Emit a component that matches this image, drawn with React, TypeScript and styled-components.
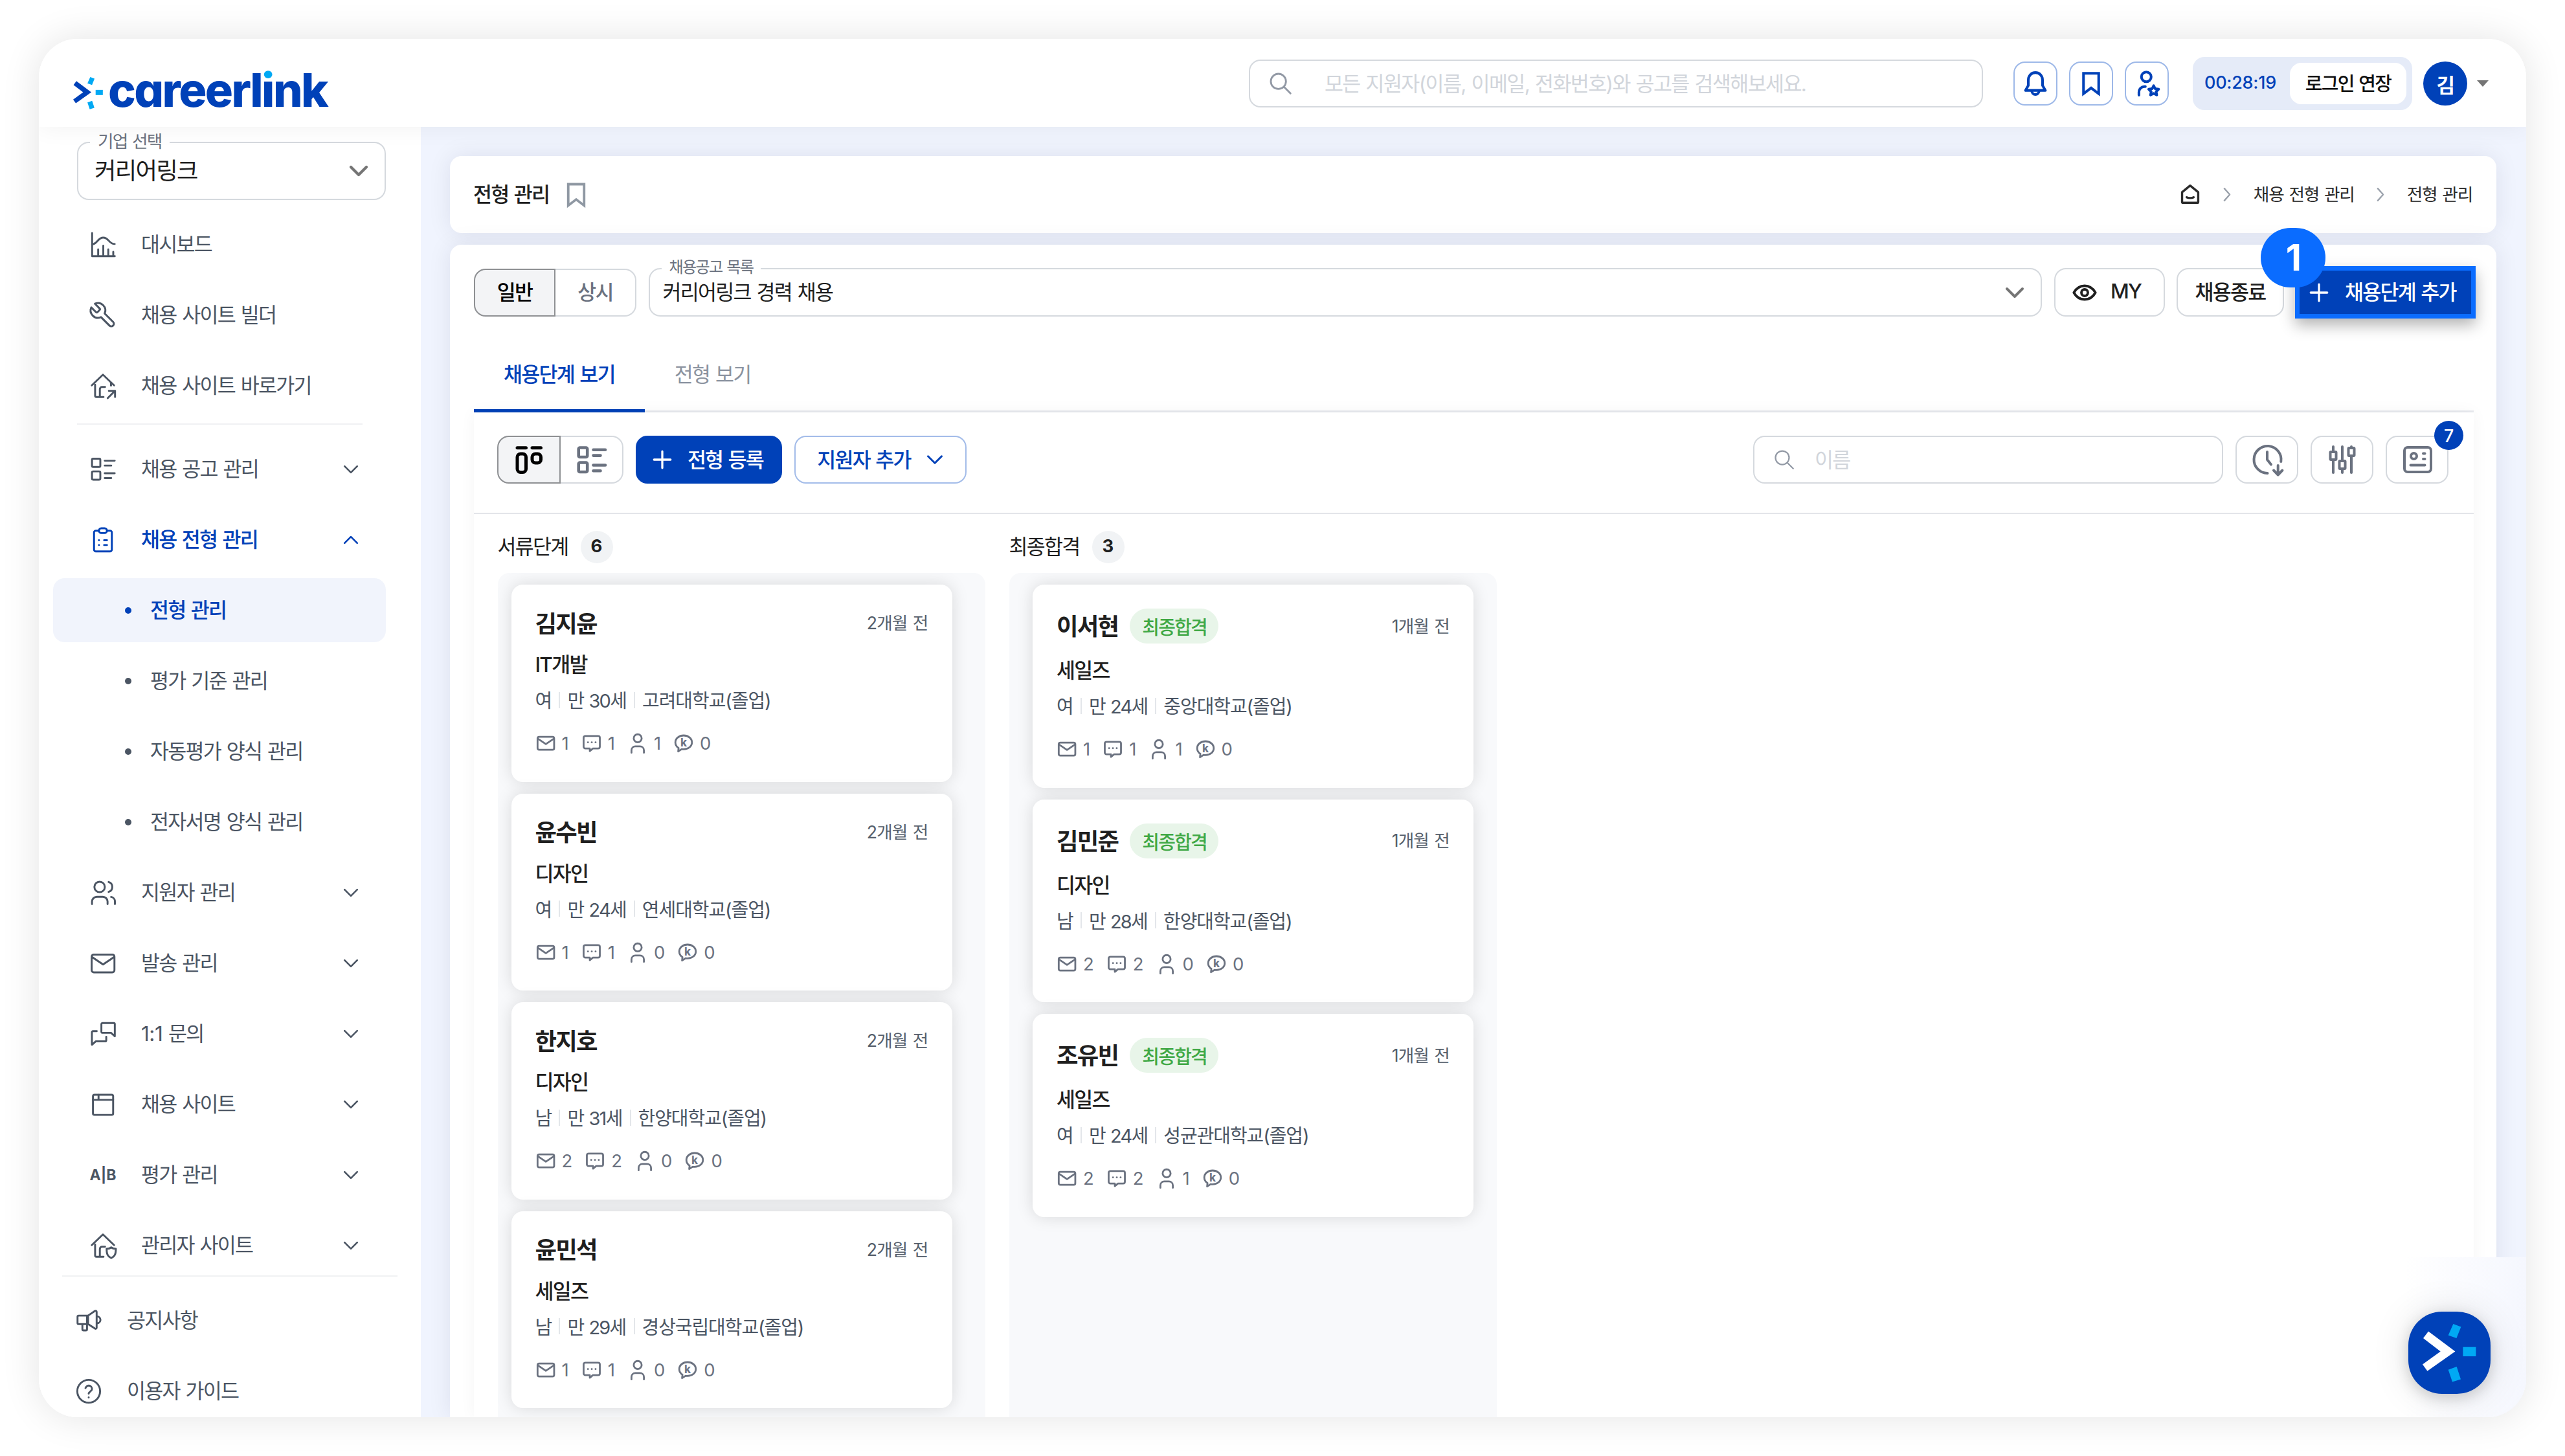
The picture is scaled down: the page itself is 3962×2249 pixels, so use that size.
import React from "react";
import styled, { createGlobalStyle, css } from "styled-components";

const BLUE = "#0041b8";
const INK = "#1f1f1f";
const SLATE = "#4b5563";
const GREY = "#6b7280";
const LINE = "#d5d9de";

const Global = createGlobalStyle`
  * { box-sizing: border-box; }
  html, body { margin: 0; padding: 0; background: #fff; }
  body {
    font-family: Inter, "Noto Sans CJK KR", sans-serif;
    font-size: 31.5px;
    letter-spacing: -0.055em;
    word-spacing: 0.05em;
    color: ${INK};
    overflow: hidden;
  }
  button { font: inherit; letter-spacing: inherit; word-spacing: inherit; color: inherit; margin: 0; padding: 0; background: #fff; border: 0; }
  svg { display: block; flex: none; overflow: visible; }
`;

/* Lifts Hangul onto the optical centre of its row. */
const T = styled.span`
  display: inline-block;
  padding-bottom: 0.14em;
`;

/* ---------- icons ---------- */

const Svg = styled.svg<{ $size: number; $stroke: number }>`
  width: ${(p) => p.$size}px;
  height: ${(p) => p.$size}px;
  fill: none;
  stroke: currentColor;
  stroke-width: ${(p) => p.$stroke};
  stroke-linecap: round;
  stroke-linejoin: round;
`;

const House = () => (
  <>
    <path d="M2.6 11.6 12 2.6l9.4 9" />
    <path d="M5.4 11v9.3a1.1 1.1 0 0 0 1.1 1.1h6" />
    <path d="M9.4 21v-6.2A1.8 1.8 0 0 1 11.200 13h2.6" />
  </>
);

const glyphs: Record<string, React.ReactNode> = {
  chart: (
    <>
      <path d="M2.900 2.200V21.700H22" />
      <path d="M2.900 11.600c4.400 0 4.600-5.600 9.300-5.600s4.800 5.400 9.700 5.400" />
      <path d="M8 16v5.500M12.300 12.800v8.700M16.500 16v5.500M20.700 18v3.500" />
    </>
  ),
  wrench: (
    <g transform="translate(24.300 -0.300) scale(-1.030 1.030)">
      <path d="M14.700 6.300a1 1 0 0 0 0 1.400l1.600 1.600a1 1 0 0 0 1.400 0l3.770-3.770a6 6 0 0 1-7.940 7.940l-6.910 6.910a2.120 2.120 0 0 1-3-3l6.910-6.910a6 6 0 0 1 7.940-7.940l-3.760 3.760z" />
    </g>
  ),
  houseArrow: (
    <>
      <House />
      <path d="M18.800 9.500v2.300" />
      <path d="m16 22.400 6-6M17 16.200h5.200v5.200" />
    </>
  ),
  houseShield: (
    <>
      <House />
      <path d="M19 13.500c1.200 1 2.500 1.200 3.900 1.200 0 4.300-.8 6.300-3.900 7.800-3.100-1.500-3.900-3.500-3.900-7.800 1.400 0 2.700-.2 3.900-1.200z" />
    </>
  ),
  list: (
    <>
      <rect x="2.800" y="3" width="7" height="7" rx="1" />
      <rect x="2.800" y="13.700" width="7" height="7" rx="1" />
      <path d="M13.500 4.700h8.400M13.500 8.800h5.500M13.500 15.300h8.400M13.500 19.400h5.500" />
    </>
  ),
  clipboard: (
    <>
      <path d="M8.600 4.200H6A1.500 1.500 0 0 0 4.500 5.700v14.500a1.500 1.500 0 0 0 1.500 1.500h12a1.500 1.500 0 0 0 1.500-1.500V5.700A1.500 1.500 0 0 0 18 4.200h-2.600" />
      <rect x="8.600" y="2.200" width="6.800" height="4" rx="2" />
      <path d="M8.600 12.300h.1M13 12.300h2.400M8.600 16.300h.1M13 16.300h2.400" />
    </>
  ),
  users: (
    <>
      <circle cx="9.200" cy="7.100" r="4.400" />
      <path d="M2.800 21.600v-2.200a4 4 0 0 1 4-4h5.100a4 4 0 0 1 4 4v2.200" />
      <path d="M16.800 2.900a4.400 4.400 0 0 1 0 8.400" />
      <path d="M18.900 15.500a3.900 3.900 0 0 1 3.200 3.900v2.200" />
    </>
  ),
  mail: (
    <>
      <rect x="2.500" y="4.600" width="19.200" height="15" rx="1.800" />
      <path d="m3 6.800 9.100 6.200 9.100-6.200" />
    </>
  ),
  chats: (
    <>
      <path d="M10.700 3.800a.9.900 0 0 1 .9-.9h9.500a.9.900 0 0 1 .9.900V14l-3.200-2.900h-7.200a.9.900 0 0 1-.9-.9z" />
      <path d="M6.800 9.700H3.600a.9.900 0 0 0-.9.900V21.200l3.200-2.900h8a.9.900 0 0 0 .9-.9v-3" />
    </>
  ),
  window: (
    <>
      <rect x="3.600" y="3.800" width="17" height="17" rx="1.300" />
      <path d="M3.600 8.100h17M8.300 4v4" />
    </>
  ),
  megaphone: (
    <>
      <path d="M11.500 7.700H3.600a1 1 0 0 0-1 1v5.200a1 1 0 0 0 1 1h7.900" />
      <path d="m11.500 7.700 5.700-3.900c.7-.4 1.500 0 1.500.8v13.200c0 .8-.8 1.200-1.500.8l-5.700-3.700z" />
      <path d="M6.700 15v4.200c0 .6.400 1 1 1h1.900c.6 0 1-.4 1-1V7.900" />
      <path d="M19 8.400a2.900 2.900 0 0 1 0 5.800" />
    </>
  ),
  help: (
    <>
      <circle cx="12" cy="12" r="9.600" />
      <path d="M9.300 9.300a2.800 2.800 0 0 1 5.500.8c0 1.900-2.800 2.300-2.800 4M12 17.200v.1" />
    </>
  ),
  search: (
    <>
      <circle cx="10" cy="10" r="7" />
      <path d="m15.200 15.200 6 6" />
    </>
  ),
  bell: (
    <>
      <path d="M12 2.800c-3.700 0-6 2.800-6 6.400v4.400l-2.400 4.200h16.800L18 13.600V9.200c0-3.600-2.300-6.400-6-6.400z" />
      <path d="M8.900 18.200a3.100 3.100 0 0 0 6.200 0" />
    </>
  ),
  bookmark: <path d="M5.600 3.400h12.800v17.200L12 15.700l-6.400 4.900z" strokeLinejoin="miter" />,
  userStar: (
    <>
      <circle cx="11.600" cy="6.400" r="4.100" />
      <path d="M5.400 21.800v-2.600a4.600 4.600 0 0 1 4.600-4.600h.8" />
      <path d="m17.800 13.800 1.300 2.600 2.900.4-2.100 2 .5 2.900-2.600-1.400-2.600 1.400.5-2.900-2.100-2 2.900-.4z" />
    </>
  ),
  home: (
    <>
      <path d="M3.200 9.800 12 2.600l8.800 7.200v10.600a1 1 0 0 1-1 1H4.200a1 1 0 0 1-1-1z" />
      <path d="M8.200 15.300c2 1.100 5.600 1.100 7.600 0" />
    </>
  ),
  eye: (
    <>
      <path d="M2 12c2-3.600 5.400-6.300 10-6.300s8 2.700 10 6.300c-2 3.600-5.400 6.300-10 6.300S4 15.600 2 12z" />
      <circle cx="12" cy="12" r="3" />
    </>
  ),
  plus: <path d="M12 3v18M3 12h18" />,
  down: <path d="m3 7.500 9 9 9-9" />,
  up: <path d="m3 16.500 9-9 9 9" />,
  right: <path d="m7.500 3 8 9-8 9" />,
  message: (
    <>
      <path d="M4.600 3.600h14.800a2 2 0 0 1 2 2v10.500a2 2 0 0 1-2 2h-6l-3.600 3v-3H4.600a2 2 0 0 1-2-2V5.600a2 2 0 0 1 2-2z" />
      <path d="M7.600 11h.1M12 11h.1M16.400 11h.1" />
    </>
  ),
  person: (
    <>
      <circle cx="12" cy="6.300" r="4.600" />
      <path d="M4.800 23v-2.800c0-2.600 1.900-4.500 4.500-4.500h5.400c2.600 0 4.500 1.900 4.500 4.500V23" />
    </>
  ),
  kakao: (
    <>
      <path d="M12 3c5.400 0 9.600 3.500 9.600 8s-4.200 8-9.600 8c-.8 0-1.500-.1-2.200-.2L5.700 21.500l.4-4C3.800 16 2.400 13.700 2.400 11c0-4.500 4.200-8 9.600-8z" />
      <text x="12" y="15.800" textAnchor="middle" fontSize="13" fontWeight="700" fill="currentColor" stroke="none" letterSpacing="0">
        k
      </text>
    </>
  ),
};

const Icon = ({ name, size = 44, stroke = 1.6 }: { name: string; size?: number; stroke?: number }) => (
  <Svg viewBox="0 0 24 24" $size={size} $stroke={stroke}>
    {glyphs[name]}
  </Svg>
);

const toolGlyphs: Record<string, React.ReactNode> = {
  board: (
    <>
      <path d="M6 5.700h13.500M29 5.700h13.500" />
      <rect x="6" y="15" width="13.500" height="28.500" rx="5" />
      <rect x="29" y="15" width="13.500" height="14" rx="5" />
    </>
  ),
  rows: (
    <>
      <rect x="3.700" y="5.500" width="13.500" height="14.500" rx="2" />
      <rect x="3.700" y="28.500" width="13.500" height="14.500" rx="2" />
      <path d="M26.500 8.800H45M26.500 17.600h11M26.500 32.500H45M26.500 41.300h11" />
    </>
  ),
  clock: (
    <>
      <path d="M24.500 45A21 21 0 1 1 45.300 27" />
      <path d="M24 12v12l6 7.500" />
      <path d="M40.700 33v14M34 40.500l6.700 7 6.700-7" />
    </>
  ),
  sliders: (
    <>
      <path d="M10 4v8M10 24v20M24 4v22M24 38v6M38 4v2M38 18v26" />
      <rect x="5.500" y="12" width="9" height="12" rx="1" />
      <rect x="19.500" y="26" width="9" height="12" rx="1" />
      <rect x="33.500" y="6" width="9" height="12" rx="1" />
    </>
  ),
  idCard: (
    <>
      <rect x="4" y="5" width="41" height="38" rx="5" />
      <circle cx="18.500" cy="18.500" r="4.500" />
      <path d="M33 14.500h2.500M33 23h2.500M13.500 32.500h22" />
    </>
  ),
};

const ToolIcon = ({ name, stroke = 4 }: { name: string; stroke?: number }) => (
  <Svg viewBox="0 0 48 48" $size={48} $stroke={stroke}>
    {toolGlyphs[name]}
  </Svg>
);

const Spark = ({ width, color }: { width: number; color: string }) => (
  <svg width={width} height={(width * 89.4) / 82.7} viewBox="22.300 19.300 82.700 89.400">
    <polygon fill={color} points="31.300,30.700 72.700,61.700 29.700,92 22.300,81.700 50,61.700 23.300,41.300" />
    <g fill="#00a9f4">
      <polygon points="69.700,19.300 81.700,23.700 74.700,41.300 62,36.700" />
      <rect x="84.700" y="55" width="20" height="14.300" />
      <polygon points="62,90 75,85.300 81.300,104.700 68.300,108.700" />
    </g>
  </svg>
);

/* ---------- shell ---------- */

const Page = styled.div`
  width: 3962px;
  height: 2249px;
  padding: 60px;
  background: #fff;
`;

const FrameStack = styled.div`
  display: grid;
  & > * { grid-area: 1 / 1; }
`;

const Frame = styled.div`
  position: relative;
  width: 3842px;
  height: 2129px;
  border-radius: 60px;
  overflow: hidden;
  display: grid;
  grid-template-rows: 136px 1993px;
  background: #fff;
`;

const FrameShadow = styled.div`
  width: 3842px;
  height: 2129px;
  border-radius: 60px;
  box-shadow: 0 0 60px rgba(0, 0, 0, 0.11);
`;

const Header = styled.header`
  position: relative;
  z-index: 2;
  display: flex;
  align-items: center;
  justify-content: space-between;
  padding: 2px 58px 0 53px;
  background: #fff;
  box-shadow: 0 0 36px rgba(0, 0, 0, 0.06);
`;

const Logo = styled.div`
  align-self: flex-start;
  display: flex;
  align-items: flex-start;
  padding-top: 41px;
  gap: 8px;
  & > svg { margin-top: 16px; }
`;

const Wordmark = styled.div`
  font-size: 72px;
  line-height: 72px;
  font-weight: 800;
  letter-spacing: -0.036em;
  color: ${BLUE};
  font-feature-settings: "cv11";
`;

const DottedI = styled.span`
  color: transparent;
  background: linear-gradient(#00a9f4 0 36%, ${BLUE} 36%);
  background-clip: text;
  -webkit-background-clip: text;
`;

const HeaderTools = styled.div`
  display: flex;
  align-items: center;
`;

const SearchBox = styled.div<{ $w: number; $pad: number; $gap: number }>`
  width: ${(p) => p.$w}px;
  height: 74px;
  display: flex;
  align-items: center;
  gap: ${(p) => p.$gap}px;
  padding-left: ${(p) => p.$pad}px;
  border: 2px solid ${LINE};
  border-radius: 18px;
  color: #9299a5;
`;

const Placeholder = styled(T)`
  color: #d1d5db;
  letter-spacing: -0.051em;
`;

const IconButtons = styled.div`
  display: flex;
  gap: 18px;
  margin: 0 37px 0 47px;
`;

const SquareButton = styled.button`
  width: 68px;
  height: 68px;
  display: grid;
  place-items: center;
  border: 2px solid #9db8e8;
  border-radius: 18px;
  color: ${BLUE};
`;

const Session = styled.div`
  width: 339px;
  height: 82px;
  display: flex;
  align-items: center;
  justify-content: space-between;
  padding: 0 9px 0 18px;
  border-radius: 18px;
  background: #e5ebf8;
`;

const Timer = styled(T)`
  font-size: 27px;
  font-weight: 500;
  letter-spacing: -0.01em;
  color: ${BLUE};
`;

const ExtendButton = styled.button`
  width: 180px;
  height: 64px;
  border-radius: 18px;
  font-size: 29px;
  font-weight: 500;
  color: #111;
`;

const Avatar = styled.div`
  width: 68px;
  height: 68px;
  margin: 0 15px 0 17px;
  display: grid;
  place-items: center;
  border-radius: 50%;
  background: ${BLUE};
  color: #fff;
  font-size: 31px;
  font-weight: 700;
`;

const Caret = styled.i`
  border: 9.500px solid transparent;
  border-top: 10px solid #757575;
  border-bottom: 0;
`;

const Body = styled.div`
  display: grid;
  grid-template-columns: 590px 1fr;
  min-height: 0;
`;

/* ---------- sidebar ---------- */

const Sidebar = styled.aside`
  display: flex;
  flex-direction: column;
  min-height: 0;
  background: #fff;
`;

const Nav = styled.nav`
  flex: 1;
  min-height: 0;
  overflow: hidden;
  padding: 23px 54px 0 22px;
`;

const Field = styled.div<{ $h: number; $pad?: number }>`
  position: relative;
  flex: 1;
  height: ${(p) => p.$h}px;
  display: flex;
  align-items: center;
  justify-content: space-between;
  padding: 0 24px 0 ${(p) => p.$pad ?? 25}px;
  border: 2px solid ${LINE};
  border-radius: 18px;
  color: #757575;
`;

const FieldLabel = styled.span<{ $size: number; $pad: number }>`
  position: absolute;
  left: 18px;
  top: -21px;
  padding: 0 ${(p) => p.$pad}px;
  line-height: 36px;
  font-size: ${(p) => p.$size}px;
  color: ${GREY};
  background: linear-gradient(transparent 50%, #fff 50%);
  &::before {
    content: "";
    position: absolute;
    inset: 14px 0 14px 0;
    background: #fff;
    z-index: -1;
  }
`;

const FieldValue = styled(T)<{ $size?: number }>`
  font-size: ${(p) => p.$size ?? 31.5}px;
  color: ${INK};
`;

const CompanyField = styled.div`
  display: flex;
  position: relative;
  z-index: 0;
  margin: 0 0 14px 37px;
`;

const navText = css<{ $on?: boolean }>`
  color: ${(p) => (p.$on ? BLUE : SLATE)};
  font-weight: ${(p) => (p.$on ? 500 : 400)};
`;

const NavRow = styled.div<{ $on?: boolean }>`
  ${navText}
  height: 109px;
  display: grid;
  grid-template-columns: 44px 1fr 24px;
  column-gap: 37px;
  align-items: center;
  padding: 0 43px 0 55px;
`;

const SubList = styled.div`
  display: flex;
  flex-direction: column;
  gap: 10px;
  padding: 5px 0;
`;

const SubRow = styled.div<{ $on?: boolean }>`
  ${navText}
  height: 99px;
  display: flex;
  align-items: center;
  gap: 29px;
  padding-left: 111px;
  border-radius: 18px;
  background: ${(p) => (p.$on ? "#f1f4fc" : "transparent")};
`;

const Dot = styled.i`
  width: 10px;
  height: 10px;
  border-radius: 50%;
  background: currentColor;
`;

const NavDivider = styled.hr`
  height: 2px;
  margin: 4px 36px 14px 37px;
  border: 0;
  background: #f0f1f3;
`;

const AbMark = styled.span`
  font-size: 23px;
  font-weight: 700;
  letter-spacing: 0;
  text-align: center;
`;

const Latin = styled.span`
  letter-spacing: -0.015em;
`;

const SideFooter = styled.div`
  height: 219px;
  margin: 0 36px;
  padding-top: 13px;
  border-top: 2px solid #f0f1f3;
  overflow: hidden;
`;

const FooterRow = styled.div`
  height: 109px;
  display: flex;
  align-items: center;
  gap: 37px;
  padding-left: 19px;
  color: ${SLATE};
`;

/* ---------- main ---------- */

const Main = styled.main`
  display: flex;
  flex-direction: column;
  gap: 18px;
  min-height: 0;
  padding: 45px 46px 0 45px;
  background: #f0f4fe;
`;

const surface = css`
  background: #fff;
  border-radius: 18px;
  box-shadow: 0 0 36px rgba(20, 20, 60, 0.085);
`;

const TitleBar = styled.section`
  ${surface}
  flex: none;
  height: 119px;
  display: flex;
  align-items: center;
  justify-content: space-between;
  padding: 0 37px 0 36px;
`;

const Title = styled.h1`
  margin: 0;
  display: flex;
  align-items: center;
  gap: 19px;
  font-size: 31.500px;
  font-weight: 500;
  & > svg { color: #8f98a3; }
`;

const Crumbs = styled.div`
  display: flex;
  align-items: center;
  font-size: 26.700px;
  letter-spacing: -0.045em;
  color: #2b2b2b;
  & > span { margin: 0 0 0 28px; }
  & > svg:not(:first-child) { color: #9aa1ab; margin-left: 28px; }
`;

const Content = styled.section`
  ${surface}
  flex: 1;
  min-height: 0;
  display: flex;
  flex-direction: column;
  padding: 36px 35px 0 37px;
  border-radius: 18px 18px 0 0;
`;

const ControlRow = styled.div`
  position: relative;
  z-index: 1;
  flex: none;
  display: flex;
  align-items: center;
  gap: 18.500px;
`;

const Toggle = styled.div`
  display: flex;
`;

const ToggleItem = styled.button<{ $on?: boolean; $w: number }>`
  width: ${(p) => p.$w}px;
  height: 74px;
  display: grid;
  place-items: center;
  border: 2px solid ${(p) => (p.$on ? "#8e9093" : LINE)};
  background: ${(p) => (p.$on ? "#f3f4f6" : "#fff")};
  color: ${(p) => (p.$on ? "#000" : GREY)};
  font-weight: 500;
  &:first-child { border-radius: 18px 0 0 18px; }
  &:last-child { border-radius: 0 18px 18px 0; border-left: 0; }
`;

const Button = styled.button<{ $w: number; $h?: number; $shift?: number; $kind?: "plain" | "primary" | "outline" }>`
  width: ${(p) => p.$w}px;
  height: ${(p) => p.$h ?? 74}px;
  flex: none;
  display: flex;
  align-items: center;
  justify-content: center;
  padding-right: ${(p) => p.$shift ?? 0}px;
  border-radius: 18px;
  font-weight: 500;
  border: 2px solid ${LINE};
  color: ${INK};
  ${(p) =>
    p.$kind === "primary" &&
    css`
      border-color: ${BLUE};
      background: ${BLUE};
      color: #fff;
    `}
  ${(p) =>
    p.$kind === "outline" &&
    css`
      border-color: #a3bce9;
      color: ${BLUE};
    `}
`;

const Gap = styled.span<{ $w: number }>`
  width: ${(p) => p.$w}px;
`;

const Highlight = styled.div`
  position: relative;
  flex: none;
  width: 279px;
  height: 81px;
  margin: -3px -3px -3px -1.500px;
  border: 7px solid #0a6cff;
  background: ${BLUE};
  box-shadow: 0 10px 22px rgba(0, 0, 0, 0.3);
  display: flex;
  align-items: center;
  padding-left: 13px;
  gap: 23px;
  color: #fff;
  font-weight: 500;
`;

const StepBadge = styled.span`
  position: absolute;
  left: -60px;
  top: -66px;
  width: 100px;
  height: 92px;
  border-radius: 46px;
  background: #0a6cff;
  color: #fff;
  display: grid;
  place-items: center;
  font-size: 56px;
  font-weight: 700;
`;

const Tabs = styled.div`
  flex: none;
  display: flex;
  height: 116px;
  margin-top: 32px;
  border-bottom: 3px solid #e7e9ee;
`;

const Tab = styled.div<{ $on?: boolean }>`
  height: 116px;
  padding: 4px 46px 0;
  display: flex;
  align-items: center;
  color: ${(p) => (p.$on ? BLUE : "#8b93a0")};
  font-weight: ${(p) => (p.$on ? 500 : 400)};
  border-bottom: 5px solid ${(p) => (p.$on ? BLUE : "transparent")};
`;

const Panel = styled.div`
  flex: 1;
  min-height: 0;
  display: flex;
  flex-direction: column;
  background: #fff;
  box-shadow: 0 0 24px rgba(0, 0, 0, 0.045);
  clip-path: inset(-30px -30px 0 -30px);
`;

const Toolbar = styled.div`
  flex: none;
  height: 157px;
  display: flex;
  align-items: center;
  justify-content: space-between;
  padding: 0 39px 9px 36px;
  border-bottom: 2px solid #e3e5e9;
`;

const Group = styled.div`
  display: flex;
  align-items: center;
  gap: 19px;
`;

const CountAnchor = styled.div`
  position: relative;
`;

const CountBadge = styled.span`
  position: absolute;
  right: -23px;
  top: -23px;
  width: 45px;
  height: 45px;
  border-radius: 50%;
  display: grid;
  place-items: center;
  background: ${BLUE};
  color: #fff;
  font-size: 26.700px;
  font-weight: 500;
  letter-spacing: 0;
`;

const ToolTint = styled.span`
  color: ${GREY};
`;

/* ---------- board ---------- */

const Board = styled.div`
  flex: 1;
  min-height: 0;
  display: flex;
  gap: 36.500px;
  padding-left: 36.500px;
  overflow: hidden;
`;

const Column = styled.div`
  width: 753.500px;
  display: flex;
  flex-direction: column;
`;

const ColumnHead = styled.div`
  flex: none;
  height: 91px;
  display: flex;
  align-items: center;
  gap: 19px;
  padding-top: 10px;
`;

const ColumnCount = styled.span`
  width: 50px;
  height: 50px;
  display: grid;
  place-items: center;
  border-radius: 50%;
  padding-bottom: 3px;
  background: #f1f3f5;
  font-size: 27.500px;
  font-weight: 700;
  letter-spacing: 0;
`;

const ColumnBody = styled.div<{ $left: number }>`
  flex: 1;
  min-height: 0;
  padding: 18px 0 0 ${(p) => p.$left}px;
  display: flex;
  flex-direction: column;
  gap: 18px;
  background: #f8f9fb;
  border-radius: 18px 18px 0 0;
  overflow: hidden;
`;

const CardBox = styled.article<{ $h: number }>`
  flex: none;
  width: 681px;
  height: ${(p) => p.$h}px;
  padding: 37px 37px 0;
  background: #fff;
  border-radius: 18px;
  box-shadow: 0 0 26px rgba(0, 0, 0, 0.13);
`;

const CardHead = styled.div<{ $h: number }>`
  height: ${(p) => p.$h}px;
  display: flex;
  align-items: center;
`;

const Name = styled.strong`
  padding-bottom: 4px;
  font-size: 36.400px;
  font-weight: 700;
`;

const Passed = styled.span`
  margin-left: 18px;
  height: 54px;
  padding: 0 18px 0 19px;
  display: flex;
  align-items: center;
  border-radius: 27px;
  background: #e8f5e9;
  color: #3fa845;
  font-size: 29px;
  font-weight: 500;
`;

const When = styled(T)`
  margin-left: auto;
  font-size: 26.700px;
  letter-spacing: -0.032em;
  color: #565f6c;
`;

const Job = styled.div`
  margin-top: 18px;
  line-height: 48px;
  font-weight: 500;
`;

const Meta = styled.div`
  margin-top: 7px;
  height: 44px;
  display: flex;
  align-items: center;
  font-size: 29px;
  color: ${SLATE};
  & > span + span {
    display: flex;
    align-items: center;
  }
  & > span:last-child {
    letter-spacing: -0.036em;
  }
  & > span + span::before {
    content: "";
    width: 2px;
    height: 25px;
    margin: 2px 11px 0 12px;
    background: #e3e6ea;
  }
`;

const Counts = styled.div`
  margin-top: 26px;
  height: 40px;
  display: flex;
  align-items: center;
  gap: 19px;
  font-size: 27.500px;
  letter-spacing: 0;
  color: ${GREY};
  & > span {
    display: flex;
    align-items: center;
    gap: 9px;
  }
`;

/* ---------- chat launcher ---------- */

const Launcher = styled.div`
  position: absolute;
  z-index: 3;
  right: 0;
  bottom: 0;
  width: 290px;
  height: 247px;
  background: linear-gradient(to right, #fff 35%, #f5f7fe);
  overflow: hidden;
`;

const LauncherButton = styled.button`
  position: absolute;
  left: 108px;
  top: 84px;
  width: 127px;
  height: 127px;
  border-radius: 52px;
  display: flex;
  align-items: center;
  padding-left: 22px;
  background: ${BLUE};
  box-shadow: 0 6px 22px rgba(0, 0, 0, 0.16), 0 2px 60px rgba(0, 0, 0, 0.12);
`;

/* ---------- data ---------- */

type Item = { icon: string; text: React.ReactNode; arrow?: "down" | "up"; on?: boolean };

const topItems: Item[] = [
  { icon: "chart", text: "대시보드" },
  { icon: "wrench", text: "채용 사이트 빌더" },
  { icon: "houseArrow", text: "채용 사이트 바로가기" },
];

const groupItems: Item[] = [
  { icon: "list", text: "채용 공고 관리", arrow: "down" },
  { icon: "clipboard", text: "채용 전형 관리", arrow: "up", on: true },
];

const subItems = ["전형 관리", "평가 기준 관리", "자동평가 양식 관리", "전자서명 양식 관리"];

const lowerItems: Item[] = [
  { icon: "users", text: "지원자 관리", arrow: "down" },
  { icon: "mail", text: "발송 관리", arrow: "down" },
  { icon: "chats", text: <><Latin>1:1</Latin> 문의</>, arrow: "down" },
  { icon: "window", text: "채용 사이트", arrow: "down" },
  { icon: "ab", text: "평가 관리", arrow: "down" },
  { icon: "houseShield", text: "관리자 사이트", arrow: "down" },
];

type Person = { name: string; job: string; meta: string[]; counts: number[]; when: string; passed?: boolean };

const documents: Person[] = [
  { name: "김지윤", job: "IT개발", meta: ["여", "만 30세", "고려대학교(졸업)"], counts: [1, 1, 1, 0], when: "2개월 전" },
  { name: "윤수빈", job: "디자인", meta: ["여", "만 24세", "연세대학교(졸업)"], counts: [1, 1, 0, 0], when: "2개월 전" },
  { name: "한지호", job: "디자인", meta: ["남", "만 31세", "한양대학교(졸업)"], counts: [2, 2, 0, 0], when: "2개월 전" },
  { name: "윤민석", job: "세일즈", meta: ["남", "만 29세", "경상국립대학교(졸업)"], counts: [1, 1, 0, 0], when: "2개월 전" },
];

const finals: Person[] = [
  { name: "이서현", job: "세일즈", meta: ["여", "만 24세", "중앙대학교(졸업)"], counts: [1, 1, 1, 0], when: "1개월 전", passed: true },
  { name: "김민준", job: "디자인", meta: ["남", "만 28세", "한양대학교(졸업)"], counts: [2, 2, 0, 0], when: "1개월 전", passed: true },
  { name: "조유빈", job: "세일즈", meta: ["여", "만 24세", "성균관대학교(졸업)"], counts: [2, 2, 1, 0], when: "1개월 전", passed: true },
];

const countIcons = ["mail", "message", "person", "kakao"];

const NavItem = ({ icon, text, arrow, on }: Item) => (
  <NavRow $on={on}>
    {icon === "ab" ? <AbMark>A|B</AbMark> : <Icon name={icon} />}
    <T>{text}</T>
    {arrow && <Icon name={arrow} size={26} stroke={2.5} />}
  </NavRow>
);

const Card = ({ person }: { person: Person }) => (
  <CardBox $h={person.passed ? 313.5 : 304.5}>
    <CardHead $h={person.passed ? 54 : 45}>
      <Name>{person.name}</Name>
      {person.passed && <Passed>최종합격</Passed>}
      <When>{person.when}</When>
    </CardHead>
    <Job>{person.job}</Job>
    <Meta>
      {person.meta.map((m) => (
        <span key={m}>{m}</span>
      ))}
    </Meta>
    <Counts>
      {person.counts.map((n, i) => (
        <span key={i}>
          <Icon name={countIcons[i]} size={32} stroke={2.1} />
          {n}
        </span>
      ))}
    </Counts>
  </CardBox>
);

const Lane = ({ title, count, left, people }: { title: string; count: number; left: number; people: Person[] }) => (
  <Column>
    <ColumnHead>
      <T>{title}</T>
      <ColumnCount>{count}</ColumnCount>
    </ColumnHead>
    <ColumnBody $left={left}>
      {people.map((p) => (
        <Card key={p.name} person={p} />
      ))}
    </ColumnBody>
  </Column>
);

export default function App() {
  return (
    <Page>
      <Global />
      <FrameStack>
        <FrameShadow />
        <Frame>
          <Header>
            <Logo>
              <Spark width={46} color={BLUE} />
              <Wordmark>
                careerl<DottedI>i</DottedI>nk
              </Wordmark>
            </Logo>
            <HeaderTools>
              <SearchBox $w={1134} $pad={27} $gap={48}>
                <Icon name="search" size={40} stroke={1.7} />
                <Placeholder>모든 지원자(이름, 이메일, 전화번호)와 공고를 검색해보세요.</Placeholder>
              </SearchBox>
              <IconButtons>
                <SquareButton><Icon name="bell" stroke={2.2} /></SquareButton>
                <SquareButton><Icon name="bookmark" stroke={2.2} /></SquareButton>
                <SquareButton><Icon name="userStar" stroke={2.2} /></SquareButton>
              </IconButtons>
              <Session>
                <Timer>00:28:19</Timer>
                <ExtendButton><T>로그인 연장</T></ExtendButton>
              </Session>
              <Avatar>김</Avatar>
              <Caret />
            </HeaderTools>
          </Header>

          <Body>
            <Sidebar>
              <Nav>
                <CompanyField>
                  <Field $h={90}>
                    <FieldLabel $size={26.7} $pad={12}>기업 선택</FieldLabel>
                    <FieldValue $size={36.4}>커리어링크</FieldValue>
                    <Icon name="down" size={32} stroke={3.2} />
                  </Field>
                </CompanyField>
                {topItems.map((i) => <NavItem key={i.icon} {...i} />)}
                <NavDivider />
                {groupItems.map((i) => <NavItem key={i.icon} {...i} />)}
                <SubList>
                  {subItems.map((t, i) => (
                    <SubRow key={t} $on={i === 0}>
                      <Dot />
                      <T>{t}</T>
                    </SubRow>
                  ))}
                </SubList>
                {lowerItems.map((i) => <NavItem key={i.icon} {...i} />)}
              </Nav>
              <SideFooter>
                <FooterRow><Icon name="megaphone" /><T>공지사항</T></FooterRow>
                <FooterRow><Icon name="help" /><T>이용자 가이드</T></FooterRow>
              </SideFooter>
            </Sidebar>

            <Main>
              <TitleBar>
                <Title>
                  <T>전형 관리</T>
                  <Icon name="bookmark" size={46} stroke={2} />
                </Title>
                <Crumbs>
                  <Icon name="home" size={34} stroke={2.4} />
                  <Icon name="right" size={25} stroke={2.2} />
                  <T>채용 전형 관리</T>
                  <Icon name="right" size={25} stroke={2.2} />
                  <T>전형 관리</T>
                </Crumbs>
              </TitleBar>

              <Content>
                <ControlRow>
                  <Toggle>
                    <ToggleItem $w={126} $on><T>일반</T></ToggleItem>
                    <ToggleItem $w={125}><T>상시</T></ToggleItem>
                  </Toggle>
                  <Field $h={75} $pad={20}>
                    <FieldLabel $size={24.2} $pad={12}>채용공고 목록</FieldLabel>
                    <FieldValue>커리어링크 경력 채용</FieldValue>
                    <Icon name="down" size={32} stroke={3} />
                  </Field>
                  <Button $w={171} $h={75} $shift={9}>
                    <Icon name="eye" size={40} stroke={2.3} />
                    <Gap $w={20} />
                    <T>MY</T>
                  </Button>
                  <Button $w={166} $h={75}><T>채용종료</T></Button>
                  <Highlight>
                    <Icon name="plus" size={34} stroke={2.3} />
                    <T>채용단계 추가</T>
                    <StepBadge>1</StepBadge>
                  </Highlight>
                </ControlRow>

                <Tabs>
                  <Tab $on><T>채용단계 보기</T></Tab>
                  <Tab><T>전형 보기</T></Tab>
                </Tabs>

                <Panel>
                  <Toolbar>
                    <Group>
                      <Toggle>
                        <ToggleItem $w={98} $on><ToolIcon name="board" stroke={5} /></ToggleItem>
                        <ToggleItem $w={97}><ToolIcon name="rows" stroke={4.6} /></ToggleItem>
                      </Toggle>
                      <Button $w={226} $kind="primary" $shift={5}>
                        <Icon name="plus" size={34} stroke={2.3} />
                        <Gap $w={22} />
                        <T>전형 등록</T>
                      </Button>
                      <Button $w={266} $kind="outline">
                        <T>지원자 추가</T>
                        <Gap $w={23} />
                        <Icon name="down" size={28} stroke={2.6} />
                      </Button>
                    </Group>
                    <Group>
                      <SearchBox $w={726} $pad={28} $gap={29}>
                        <Icon name="search" size={36} stroke={1.5} />
                        <Placeholder>이름</Placeholder>
                      </SearchBox>
                      <Button $w={97}><ToolTint><ToolIcon name="clock" /></ToolTint></Button>
                      <Button $w={97}><ToolTint><ToolIcon name="sliders" /></ToolTint></Button>
                      <CountAnchor>
                        <Button $w={97}><ToolTint><ToolIcon name="idCard" /></ToolTint></Button>
                        <CountBadge>7</CountBadge>
                      </CountAnchor>
                    </Group>
                  </Toolbar>
                  <Board>
                    <Lane title="서류단계" count={6} left={21} people={documents} />
                    <Lane title="최종합격" count={3} left={36.5} people={finals} />
                  </Board>
                </Panel>
              </Content>
            </Main>
          </Body>

          <Launcher>
            <LauncherButton>
              <Spark width={82.7} color="#fff" />
            </LauncherButton>
          </Launcher>
        </Frame>
      </FrameStack>
    </Page>
  );
}
